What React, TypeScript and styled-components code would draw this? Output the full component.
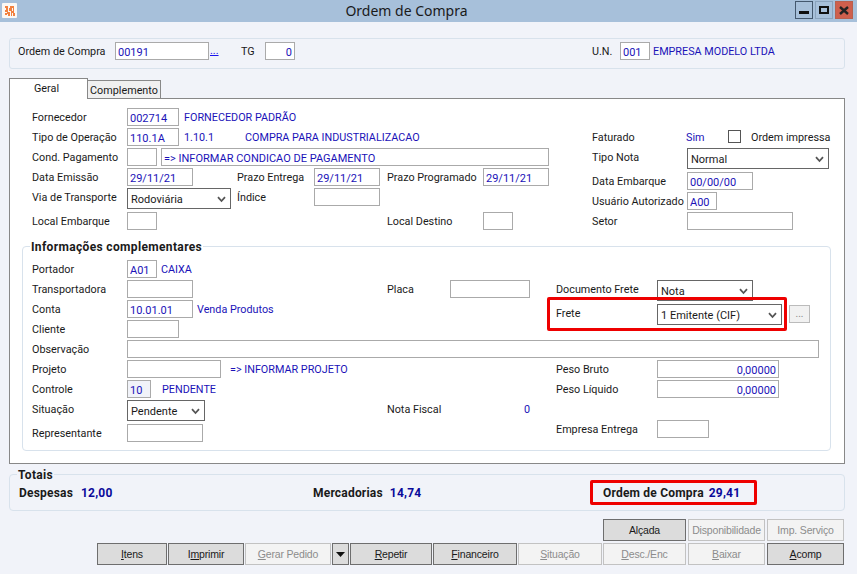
import React from "react";
import styled, { createGlobalStyle } from "styled-components";

const Global = createGlobalStyle`
  html, body { margin: 0; padding: 0; background: #f1f3f9; }
  body { font-family: Roboto, "Noto Sans", sans-serif; font-size: 10.8px; color: #1a1a1a; }
`;
const Win = styled.div`
  width: 857px; height: 574px; overflow: hidden; position: relative; background: #f1f3f9;
`;
const TitleBar = styled.div`
  height: 22px; box-sizing: border-box; background: #a7c0da; display: flex; align-items: center; justify-content: center;
  position: relative; padding: 0 44px 2px 0; font-family: "Noto Sans", sans-serif; font-size: 14px; color: #1a1a1a;
`;
const AppIcon = styled.svg`
  position: absolute; left: 2px; top: 3px;
`;
const Controls = styled.div`
  position: absolute; right: 4px; top: 1px; display: flex; gap: 2px;
`;
const Ctrl = styled.div<{ $v: string }>`
  width: 18px; height: 18px; box-sizing: border-box; display: flex; align-items: center; justify-content: center;
  border: 1px solid ${p => (p.$v === "min" ? "#44586e" : p.$v === "close" ? "#b8604e" : "#8aa3bd")};
  background: ${p => (p.$v === "close" ? "#cf5f4d" : "#a7c0da")};
`;
const TopGroup = styled.div`
  margin: 16px 12px 0 9px; height: 31px; box-sizing: border-box; border: 1px solid #d8e2ec; border-radius: 3px;
  display: flex; align-items: flex-start; padding-top: 3px; padding-left: 8px;
`;
const Label = styled.span<{ $w?: number; $ml?: number }>`
  display: block; flex: none; line-height: 20px; white-space: nowrap;
  ${p => (p.$w ? `width:${p.$w}px;` : "")}
  ${p => (p.$ml ? `margin-left:${p.$ml}px;` : "")}
`;
const Value = styled(Label)`
  color: #1a12b8;
`;
const Input = styled.div<{ $w: number; $ml?: number; $right?: boolean; $gray?: boolean }>`
  flex: none; box-sizing: border-box; width: ${p => p.$w}px; height: 18px; border: 1px solid #aaa;
  background: ${p => (p.$gray ? "#f1f3f9" : "#fff")}; color: #1a12b8; padding: 1px 2px 0; line-height: 18px; font-size: 11px;
  text-align: ${p => (p.$right ? "right" : "left")}; white-space: nowrap;
  ${p => (p.$ml ? `margin-left:${p.$ml}px;` : "")}
`;
const SelectBox = styled.div<{ $w: number }>`
  flex: none; box-sizing: border-box; width: ${p => p.$w}px; height: 21px; border: 1px solid #666;
  background: #fff; display: flex; align-items: center; justify-content: space-between; padding: 2px 4px 0 3px;
  color: #1a1a1a; font-size: 11px;
`;
const LinkDots = styled.a`
  color: #1a12ee; text-decoration: underline; margin-left: 1px; width: 9px; line-height: 18px; flex: none;
`;
const TabStrip = styled.div`
  display: flex; align-items: flex-start; margin: 9px 0 0 9px; height: 21px; position: relative; z-index: 1;
`;
const TabOn = styled.div`
  width: 79px; height: 21px; box-sizing: border-box; background: #fff; border: 1px solid #888; border-bottom: none;
  text-align: center; padding-right: 4px; line-height: 19px;
`;
const TabOff = styled.div`
  width: 73px; height: 19px; margin-top: 2px; box-sizing: border-box; background: #f0f0f0; border: 1px solid #888; border-left: none;
  text-align: center; line-height: 20px;
`;
const Panel = styled.div`
  margin: -1px 12px 0 9px; height: 366px; box-sizing: border-box; background: #fff; border: 1px solid #888;
  padding: 9px 0 0 22px;
`;
const Columns = styled.div`
  display: flex;
`;
const Col = styled.div<{ $w: number }>`
  width: ${p => p.$w}px; flex: none; display: flex; flex-direction: column;
`;
const Row = styled.div<{ $h?: number }>`
  display: flex; align-items: flex-start; height: ${p => p.$h ?? 20}px;
`;
const Group = styled.div`
  margin: 16px 0 0 -10px; width: 809px; height: 205px; box-sizing: border-box; border: 1px solid #d8e2ec; border-radius: 4px;
  padding: 13px 0 0 9px; position: relative;
`;
const Legend = styled.div<{ $l: number; $t: number }>`
  position: absolute; left: ${p => p.$l}px; top: ${p => p.$t}px; font-weight: 700; font-size: 12px; line-height: 14px;
  padding: 0 1px; color: #1a1a1a; letter-spacing: 0.35px; white-space: nowrap;
`;
const GroupLegend = styled(Legend)`
  background: #fff;
`;
const TotalsLegend = styled(Legend)`
  background: #f1f3f9;
`;
const Totals = styled.div`
  margin: 10px 12px 0 9px; height: 37px; box-sizing: border-box; border: 1px solid #d8e2ec; border-radius: 4px;
  position: relative; display: flex; align-items: center; padding-left: 9px; font-weight: 700; font-size: 12px; letter-spacing: 0.2px;
`;
const TotalPart = styled.div<{ $w: number; $gap: number }>`
  width: ${p => p.$w}px; flex: none; display: flex; gap: ${p => p.$gap}px; white-space: nowrap;
`;
const TotalVal = styled.span`
  color: #0a0a9a;
`;
const RedBox = styled.div<{ $l: number; $t: number; $w: number; $h: number }>`
  position: absolute; left: ${p => p.$l}px; top: ${p => p.$t}px; width: ${p => p.$w}px; height: ${p => p.$h}px;
  box-sizing: border-box; border: 3px solid #ee0000; border-radius: 2px; pointer-events: none;
`;
const Buttons = styled.div`
  margin: 8px 13px 0 0; display: flex; flex-direction: column; gap: 2px; align-items: flex-end;
`;
const BtnRow = styled.div`
  display: flex; gap: 1px;
`;
const Btn = styled.div<{ $w: number; $off?: boolean; $ml?: number }>`
  width: ${p => p.$w}px; height: 22px; box-sizing: border-box; flex: none;
  display: flex; align-items: center; justify-content: center; font-family: "Liberation Sans", sans-serif;
  font-size: 10.5px; letter-spacing: -0.17px;
  background: ${p => (p.$off ? "#f3f3f3" : "#dcdcdc")};
  border: 1px solid ${p => (p.$off ? "#c2c2c2" : "#6e6e6e")};
  color: ${p => (p.$off ? "#8c8c8c" : "#1a1a1a")};
  ${p => (p.$ml ? `margin-left:${p.$ml}px;` : "")}
  white-space: pre;
`;
const Check = styled.div`
  width: 13px; height: 13px; box-sizing: border-box; border: 1px solid #555; background: #fff; margin: 2px 10px 0 0; flex: none;
`;
const DotsBtn = styled.div`
  width: 21px; height: 18px; box-sizing: border-box; border: 1px solid #bbb; background: #f1f1f1; color: #888; margin: 1px 0 0 7px;
  text-align: center; line-height: 15px; font-size: 10px; flex: none;
`;

const Chevron = () => (
  <svg width="9" height="7" viewBox="0 0 9 7">
    <path d="M1 1.2 L4.5 5 L8 1.2" fill="none" stroke="#555" strokeWidth="1.8" />
  </svg>
);

const Sel = ({ w, children }: { w: number; children: React.ReactNode }) => (
  <SelectBox $w={w}>
    <span>{children}</span>
    <Chevron />
  </SelectBox>
);

export default function App() {
  return (
    <Win>
      <Global />
      <TitleBar>
        <AppIcon width="15" height="15" viewBox="0 0 15 15">
          <rect width="15" height="15" rx="1" fill="#fbf8f4" />
          <path d="M3 3h3v2H3zM8 3h4v2H8zM4 5h2v2H4zM7 5h3v3H7zM11 5h1v3h-1zM3 7h3v2H3zM5 9h3v2H5zM9 8h3v2H9zM3 10h2v2H3zM6 11h2v2H6zM9 10h1v3H9zM11 10h2v3h-2z" fill="#f2813f" />
        </AppIcon>
        Ordem de Compra
        <Controls>
          <Ctrl $v="min">
            <svg width="10" height="9" viewBox="0 0 10 9"><rect x="0" y="5" width="10" height="3" fill="#111" /></svg>
          </Ctrl>
          <Ctrl $v="max">
            <svg width="10" height="9" viewBox="0 0 10 9"><rect x="1" y="1" width="8" height="6" fill="none" stroke="#111" strokeWidth="2" /></svg>
          </Ctrl>
          <Ctrl $v="close">
            <svg width="10" height="9" viewBox="0 0 10 9"><path d="M1 1 L9 8 M9 1 L1 8" stroke="#222" strokeWidth="2.4" /></svg>
          </Ctrl>
        </Controls>
      </TitleBar>

      <TopGroup>
        <Label $w={97}>Ordem de Compra</Label>
        <Input $w={94}>00191</Input>
        <LinkDots>...</LinkDots>
        <Label $w={24} $ml={22}>TG</Label>
        <Input $w={30} $right>0</Input>
        <Label $w={28} $ml={297}>U.N.</Label>
        <Input $w={30}>001</Input>
        <Value $ml={3}>EMPRESA MODELO LTDA</Value>
      </TopGroup>

      <TabStrip>
        <TabOn>Geral</TabOn>
        <TabOff>Complemento</TabOff>
      </TabStrip>

      <Panel>
        <Columns>
          <Col $w={560}>
            <Row>
              <Label $w={95}>Fornecedor</Label>
              <Input $w={52}>002714</Input>
              <Value $ml={5}>FORNECEDOR PADRÃO</Value>
            </Row>
            <Row>
              <Label $w={95}>Tipo de Operação</Label>
              <Input $w={52}>110.1A</Input>
              <Value $w={61} $ml={5}>1.10.1</Value>
              <Value>COMPRA PARA INDUSTRIALIZACAO</Value>
            </Row>
            <Row>
              <Label $w={95}>Cond. Pagamento</Label>
              <Input $w={30} />
              <Input $w={388} $ml={4}>=&gt; INFORMAR CONDICAO DE PAGAMENTO</Input>
            </Row>
            <Row>
              <Label $w={95}>Data Emissão</Label>
              <Input $w={66}>29/11/21</Input>
              <Label $w={77} $ml={44}>Prazo Entrega</Label>
              <Input $w={66}>29/11/21</Input>
              <Label $w={96} $ml={7}>Prazo Programado</Label>
              <Input $w={66}>29/11/21</Input>
            </Row>
            <Row $h={24}>
              <Label $w={95}>Via de Transporte</Label>
              <Sel w={104}>Rodoviária</Sel>
              <Label $w={77} $ml={6}>Índice</Label>
              <Input $w={66} />
            </Row>
            <Row $h={18}>
              <Label $w={95}>Local Embarque</Label>
              <Input $w={30} />
              <Label $w={96} $ml={230}>Local Destino</Label>
              <Input $w={30} />
            </Row>
          </Col>
          <Col $w={240}>
            <Row />
            <Row>
              <Label $w={94}>Faturado</Label>
              <Value $w={42}>Sim</Value>
              <Check />
              <Label>Ordem impressa</Label>
            </Row>
            <Row $h={24}>
              <Label $w={95}>Tipo Nota</Label>
              <Sel w={142}>Normal</Sel>
            </Row>
            <Row>
              <Label $w={95}>Data Embarque</Label>
              <Input $w={66}>00/00/00</Input>
            </Row>
            <Row>
              <Label $w={95}>Usuário Autorizado</Label>
              <Input $w={30}>A00</Input>
            </Row>
            <Row $h={18}>
              <Label $w={95}>Setor</Label>
              <Input $w={106} />
            </Row>
          </Col>
        </Columns>

        <Group>
          <GroupLegend $l={7} $t={-7}>Informações complementares</GroupLegend>
          <Columns>
            <Col $w={524}>
              <Row>
                <Label $w={95}>Portador</Label>
                <Input $w={30}>A01</Input>
                <Value $ml={4}>CAIXA</Value>
              </Row>
              <Row>
                <Label $w={95}>Transportadora</Label>
                <Input $w={66} />
                <Label $w={63} $ml={194}>Placa</Label>
                <Input $w={80} />
              </Row>
              <Row>
                <Label $w={95}>Conta</Label>
                <Input $w={66}>10.01.01</Input>
                <Value $ml={4}>Venda Produtos</Value>
              </Row>
              <Row>
                <Label $w={95}>Cliente</Label>
                <Input $w={52} />
              </Row>
            </Col>
            <Col $w={270}>
              <Row />
              <Row $h={24}>
                <Label $w={101}>Documento Frete</Label>
                <Sel w={96}>Nota</Sel>
              </Row>
              <Row $h={36}>
                <Label $w={101}>Frete</Label>
                <Sel w={125}>1 Emitente (CIF)</Sel>
                <DotsBtn>...</DotsBtn>
              </Row>
            </Col>
          </Columns>
          <Row>
            <Label $w={95}>Observação</Label>
            <Input $w={692} />
          </Row>
          <Columns>
            <Col $w={524}>
              <Row>
                <Label $w={95}>Projeto</Label>
                <Input $w={94} />
                <Value $ml={9}>=&gt; INFORMAR PROJETO</Value>
              </Row>
              <Row>
                <Label $w={95}>Controle</Label>
                <Input $w={24} $gray>10</Input>
                <Value $ml={11}>PENDENTE</Value>
              </Row>
              <Row $h={24}>
                <Label $w={95}>Situação</Label>
                <Sel w={78}>Pendente</Sel>
                <Label $w={137} $ml={182}>Nota Fiscal</Label>
                <Value>0</Value>
              </Row>
              <Row $h={18}>
                <Label $w={95}>Representante</Label>
                <Input $w={76} />
              </Row>
            </Col>
            <Col $w={270}>
              <Row>
                <Label $w={101}>Peso Bruto</Label>
                <Input $w={122} $right>0,00000</Input>
              </Row>
              <Row>
                <Label $w={101}>Peso Líquido</Label>
                <Input $w={122} $right>0,00000</Input>
              </Row>
              <Row />
              <Row $h={18}>
                <Label $w={101}>Empresa Entrega</Label>
                <Input $w={52} />
              </Row>
            </Col>
          </Columns>
        </Group>
      </Panel>

      <Totals>
        <TotalsLegend $l={7} $t={-7}>Totais</TotalsLegend>
        <TotalPart $w={294} $gap={8}>Despesas <TotalVal>12,00</TotalVal></TotalPart>
        <TotalPart $w={290} $gap={7}>Mercadorias <TotalVal>14,74</TotalVal></TotalPart>
        <TotalPart $w={160} $gap={5}>Ordem de Compra <TotalVal>29,41</TotalVal></TotalPart>
      </Totals>

      <Buttons>
        <BtnRow>
          <Btn $w={83}>Alçada</Btn>
          <Btn $w={77} $off $ml={1}>Disponibilidade</Btn>
          <Btn $w={77} $off $ml={1}>Imp. Serviço</Btn>
        </BtnRow>
        <BtnRow>
          <Btn $w={70}><u>I</u>tens</Btn>
          <Btn $w={76}>I<u>m</u>primir</Btn>
          <Btn $w={86} $off><u>G</u>erar Pedido</Btn>
          <Btn $w={17}>
            <svg width="9" height="5" viewBox="0 0 9 5"><path d="M0 0h9L4.5 5z" fill="#111" /></svg>
          </Btn>
          <Btn $w={82}><u>R</u>epetir</Btn>
          <Btn $w={84}><u>F</u>inanceiro</Btn>
          <Btn $w={84} $off><u>S</u>ituação</Btn>
          <Btn $w={83} $off><u>D</u>esc./Enc</Btn>
          <Btn $w={77} $off $ml={1}><u>B</u>aixar</Btn>
          <Btn $w={77} $ml={1}><u>A</u>comp</Btn>
        </BtnRow>
      </Buttons>

      <RedBox $l={547} $t={297} $w={240} $h={34} />
      <RedBox $l={590} $t={480} $w={167} $h={25} />
    </Win>
  );
}
